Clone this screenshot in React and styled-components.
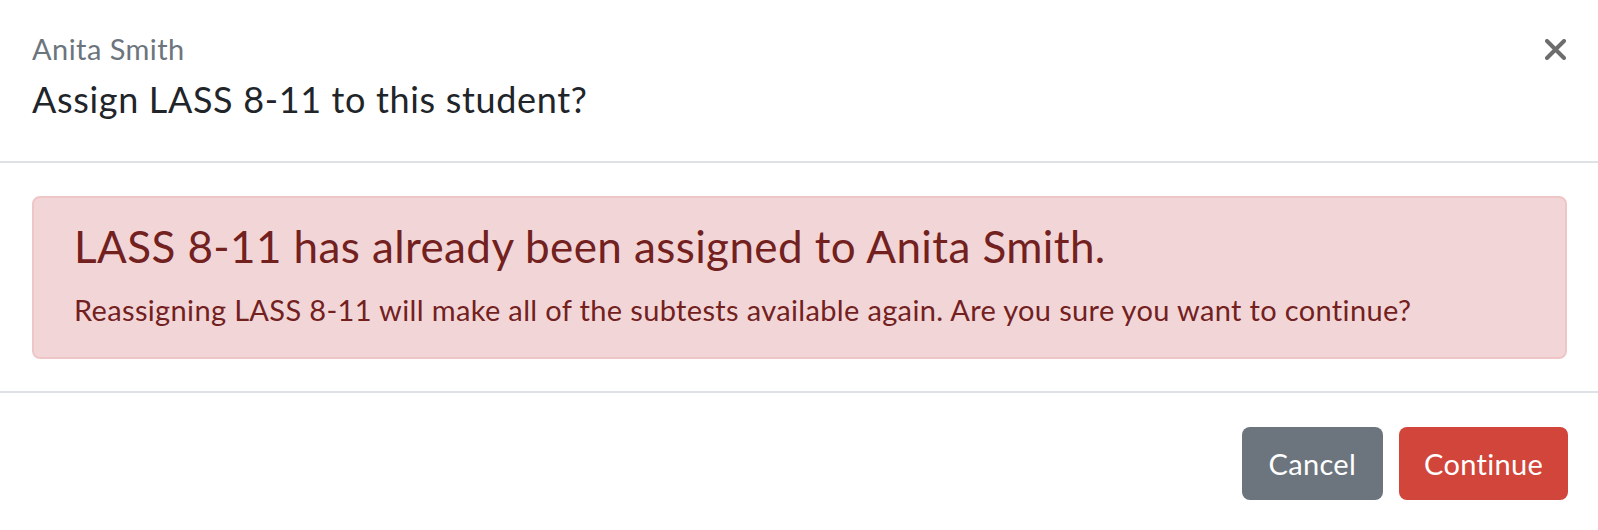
import React from "react";
import styled, { createGlobalStyle } from "styled-components";

const Global = createGlobalStyle`
  html, body { margin: 0; padding: 0; background: #ffffff; }
  body { font-family: "Lato", "Noto Sans", sans-serif; }
  * { box-sizing: border-box; }
`;

const Modal = styled.div`
  width: 1598px;
  height: 530px;
  background: #ffffff;
  display: flex;
  flex-direction: column;
  overflow: hidden;
`;

const Header = styled.div`
  display: flex;
  align-items: flex-start;
  justify-content: space-between;
  padding: 31px 32px 0 32px;
  height: 163px;
  border-bottom: 2px solid #dee2e6;
`;

const TitleBlock = styled.div`
  display: flex;
  flex-direction: column;
`;

const Subtitle = styled.div`
  font-size: 29px;
  line-height: 36px;
  letter-spacing: 0.45px;
  color: #6c757d;
`;

const Title = styled.h5`
  margin: 10px 0 0 0;
  font-size: 36px;
  line-height: 44px;
  letter-spacing: 0.65px;
  font-weight: 400;
  color: #212529;
`;

const CloseButton = styled.button`
  border: none;
  background: transparent;
  padding: 0;
  margin-top: 8px;
  width: 21px;
  height: 21px;
  display: flex;
  align-items: center;
  justify-content: center;
  cursor: pointer;
`;

const Body = styled.div`
  padding: 33px 31px 0 32px;
  height: 230px;
  border-bottom: 2px solid #dee2e6;
`;

const Alert = styled.div`
  background: #f2d6d7;
  border: 2px solid #efc6c7;
  border-radius: 8px;
  color: #72211f;
  padding: 22px 40px 0 40px;
  height: 163px;
`;

const AlertHeading = styled.h4`
  margin: 0;
  font-size: 44px;
  line-height: 52px;
  letter-spacing: 0.4px;
  font-weight: 400;
`;

const AlertText = styled.p`
  margin: 18px 0 0 0;
  font-size: 29px;
  line-height: 40px;
  letter-spacing: 0.35px;
`;

const Footer = styled.div`
  display: flex;
  justify-content: flex-end;
  align-items: flex-start;
  gap: 16px;
  padding: 34px 30px 0 32px;
  flex: 1;
`;

const Button = styled.button`
  height: 73px;
  padding: 0 ${(p) => p.$px}px;
  border: none;
  border-radius: 8px;
  font-family: "Lato", "Noto Sans", sans-serif;
  font-size: 29px;
  letter-spacing: 0.3px;
  color: #ffffff;
  background: ${(p) => p.$bg};
  cursor: pointer;
`;

export default function App() {
  return (
    <>
      <Global />
      <Modal>
        <Header>
          <TitleBlock>
            <Subtitle>Anita Smith</Subtitle>
            <Title>Assign LASS 8-11 to this student?</Title>
          </TitleBlock>
          <CloseButton aria-label="Close">
            <svg width="21" height="21" viewBox="0 0 21 21">
              <path d="M2 2 L19 19 M19 2 L2 19" stroke="#6d6d6d" strokeWidth="4" strokeLinecap="round" />
            </svg>
          </CloseButton>
        </Header>
        <Body>
          <Alert>
            <AlertHeading>LASS 8-11 has already been assigned to Anita Smith.</AlertHeading>
            <AlertText>
              Reassigning LASS 8-11 will make all of the subtests available again. Are you sure you want to continue?
            </AlertText>
          </Alert>
        </Body>
        <Footer>
          <Button $bg="#6c757d" $px={27}>Cancel</Button>
          <Button $bg="#d1453b" $px={25}>Continue</Button>
        </Footer>
      </Modal>
    </>
  );
}
